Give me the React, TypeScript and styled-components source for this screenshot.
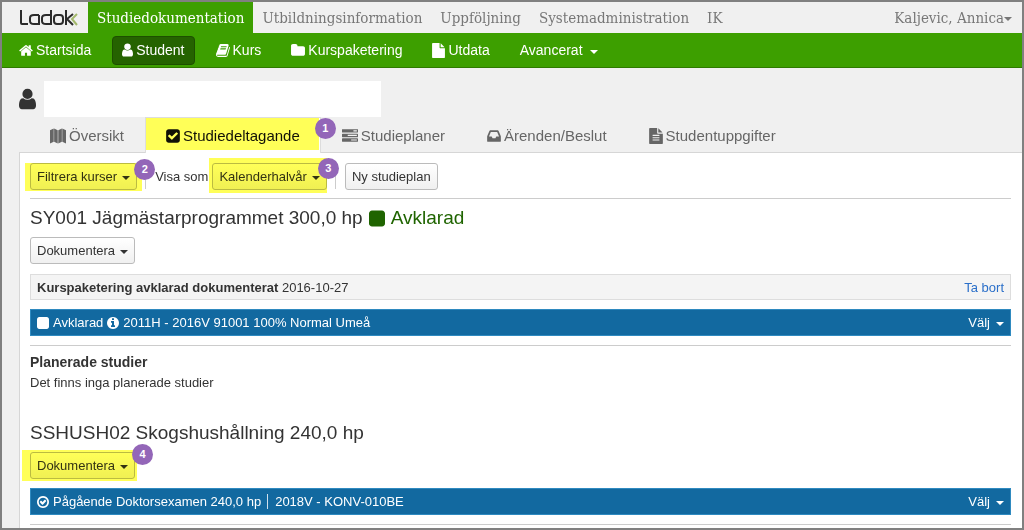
import React from 'react';
import styled, { createGlobalStyle, css } from 'styled-components';

const GlobalStyle = createGlobalStyle`
  * { box-sizing: border-box; }
  body { margin: 0; background: #fff; }
  body, button { font-family: "Liberation Sans", Arial, sans-serif; font-size: 13px; color: #333; }
  button { margin: 0; cursor: pointer; }
  h1, h2, h3, p { margin: 0; }
`;

/* Each glyph: left edge, width on the 1792 grid, path */
const glyphs: Record<string, [number, number, string]> = {
  home: [64, 1664, 'M1472 992v480q0 26-19 45t-45 19h-384v-384h-256v384h-384q-26 0-45-19t-19-45v-480q0-1 .5-3t.5-3l575-474 575 474q1 2 1 6zm223-69l-62 74q-8 9-21 11h-3q-13 0-21-7l-692-577-692 577q-12 8-24 7-13-2-21-11l-62-74q-8-10-7-23.5t11-21.5l719-599q32-26 76-26t76 26l244 204v-195q0-14 9-23t23-9h192q14 0 23 9t9 23v408l219 182q10 8 11 21.5t-7 23.5z'],
  user: [256, 1280, 'M1536 1399q0 109-62.5 187t-150.5 78h-854q-88 0-150.5-78t-62.5-187q0-85 8.5-160.5t31.5-152 58.5-131 94-89 134.5-34.5q131 128 313 128t313-128q76 0 134.5 34.5t94 89 58.5 131 31.5 152 8.5 160.5zm-256-887q0 159-112.5 271.5t-271.5 112.5-271.5-112.5-112.5-271.5 112.5-271.5 271.5-112.5 271.5 112.5 112.5 271.5z'],
  book: [64, 1664, 'M1703 478q40 57 18 129l-275 906q-19 64-76.5 107.5t-122.5 43.5h-923q-77 0-148.5-53.5t-99.5-131.5q-24-67-2-127 0-4 3-27t4-37q1-8-3-21.5t-3-19.5q2-11 8-21t16.5-23.5 16.5-23.5q23-38 45-91.5t30-91.5q3-10 .5-30t-.5-28q3-11 17-28t17-23q21-36 42-92t25-90q1-9-2.5-32t.5-28q4-13 22-30.5t22-22.5q19-26 42.5-84.5t27.5-96.5q1-8-3-25.5t-2-26.5q2-8 9-18t18-23 17-21q8-12 16.5-30.5t15-35 16-36 19.5-32 26.5-23.5 36-11.5 47.5 5.5l-1 3q38-9 51-9h761q74 0 114 56t18 130l-274 906q-36 119-71.5 153.5t-128.5 34.5h-869q-27 0-38 15-11 16-1 43 24 70 144 70h923q29 0 56-15.5t35-41.5l300-987q7-22 5-57 38 15 59 43zm-1064 2q-4 13 2 22.5t20 9.5h608q13 0 25.5-9.5t16.5-22.5l21-64q4-13-2-22.5t-20-9.5h-608q-13 0-25.5 9.5t-16.5 22.5zm-83 256q-4 13 2 22.5t20 9.5h608q13 0 25.5-9.5t16.5-22.5l21-64q4-13-2-22.5t-20-9.5h-608q-13 0-25.5 9.5t-16.5 22.5z'],
  folder: [64, 1664, 'M1728 608v704q0 92-66 158t-158 66h-1216q-92 0-158-66t-66-158v-960q0-92 66-158t158-66h320q92 0 158 66t66 158v32h672q92 0 158 66t66 158z'],
  file: [128, 1536, 'M1152 512v-472q22 14 36 28l408 408q14 14 28 36h-472zm-128 32q0 40 28 68t68 28h544v1056q0 40-28 68t-68 28h-1344q-40 0-68-28t-28-68v-1600q0-40 28-68t68-28h800v544z'],
  map: [0, 1792, 'M0 256l416-192v1472l-416 192zM464 64l400 192v1472l-400-192zM928 256l400-192v1472l-400 192zM1376 64l416 192v1472l-416-192z'],
  check: [128, 1536, 'M813 1299l614-614q19-19 19-45t-19-45l-102-102q-19-19-45-19t-45 19l-467 467-211-211q-19-19-45-19t-45 19l-102 102q-19 19-19 45t19 45l358 358q19 19 45 19t45-19zm851-883v960q0 119-84.5 203.5t-203.5 84.5h-960q-119 0-203.5-84.5t-84.5-203.5v-960q0-119 84.5-203.5t203.5-84.5h960q119 0 203.5 84.5t84.5 203.5z'],
  tasks: [0, 1792, 'M1024 1408h640v-128h-640v128zm-384-512h1024v-128h-1024v128zm640-512h384v-128h-384v128zm512 832v256q0 26-19 45t-45 19h-1664q-26 0-45-19t-19-45v-256q0-26 19-45t45-19h1664q26 0 45 19t19 45zm0-512v256q0 26-19 45t-45 19h-1664q-26 0-45-19t-19-45v-256q0-26 19-45t45-19h1664q26 0 45 19t19 45zm0-512v256q0 26-19 45t-45 19h-1664q-26 0-45-19t-19-45v-256q0-26 19-45t45-19h1664q26 0 45 19t19 45z'],
  inbox: [128, 1536, 'M1151 960h316q-1-3-2.5-8.5t-2.5-7.5l-212-496h-708l-212 496q-1 3-2.5 8.5t-2.5 7.5h316l95 192h320zm513 30v482q0 26-19 45t-45 19h-1408q-26 0-45-19t-19-45v-482q0-62 25-123l238-552q10-25 36.5-42t52.5-17h832q26 0 52.5 17t36.5 42l238 552q25 61 25 123z'],
  fileText: [128, 1536, 'M1596 476q14 14 28 36h-472v-472q22 14 36 28zm-476 164h544v1056q0 40-28 68t-68 28h-1344q-40 0-68-28t-28-68v-1600q0-40 28-68t68-28h800v544q0 40 28 68t68 28zm160 736v-64q0-14-9-23t-23-9h-704q-14 0-23 9t-9 23v64q0 14 9 23t23 9h704q14 0 23-9t9-23zm0-256v-64q0-14-9-23t-23-9h-704q-14 0-23 9t-9 23v64q0 14 9 23t23 9h704q14 0 23-9t9-23zm0-256v-64q0-14-9-23t-23-9h-704q-14 0-23 9t-9 23v64q0 14 9 23t23 9h704q14 0 23-9t9-23z'],
  info: [128, 1536, 'M1152 1376v-160q0-14-9-23t-23-9h-96v-512q0-14-9-23t-23-9h-320q-14 0-23 9t-9 23v160q0 14 9 23t23 9h96v320h-96q-14 0-23 9t-9 23v160q0 14 9 23t23 9h448q14 0 23-9t9-23zm-128-896v-160q0-14-9-23t-23-9h-192q-14 0-23 9t-9 23v160q0 14 9 23t23 9h192q14 0 23-9t9-23zm640 416q0 209-103 385.5t-279.5 279.5-385.5 103-385.5-103-279.5-279.5-103-385.5 103-385.5 279.5-279.5 385.5-103 385.5 103 279.5 279.5 103 385.5z'],
  checkCircle: [128, 1536, 'M1299 813l-422 422q-19 19-45 19t-45-19l-294-294q-19-19-19-45t19-45l102-102q19-19 45-19t45 19l147 147 275-275q19-19 45-19t45 19l102 102q19 19 19 45t-19 45zm141 83q0-148-73-273t-198-198-273-73-273 73-198 198-73 273 73 273 198 198 273 73 273-73 198-198 73-273zm224 0q0 209-103 385.5t-279.5 279.5-385.5 103-385.5-103-279.5-279.5-103-385.5 103-385.5 279.5-279.5 385.5-103 385.5 103 279.5 279.5 103 385.5z'],
  square: [128, 1536, 'M1664 416v960q0 119-84.5 203.5t-203.5 84.5h-960q-119 0-203.5-84.5t-84.5-203.5v-960q0-119 84.5-203.5t203.5-84.5h960q119 0 203.5 84.5t84.5 203.5z'],
};

const Svg = styled.svg`
  flex: none;
  fill: currentColor;
`;

function Icon({ name, size = 16 }: { name: string; size?: number }) {
  const [left, width, path] = glyphs[name];
  return (
    <Svg
      width={Math.round((size * width) / 1792)}
      height={size}
      viewBox={`${left} 0 ${width} 1792`}
      aria-hidden="true"
    >
      <path d={path} />
    </Svg>
  );
}

const Caret = styled.span`
  flex: none;
  margin-top: 3px;
  border: 4px solid transparent;
  border-top-color: currentColor;
  border-bottom: 0;
`;

const Page = styled.div`
  min-height: 100vh;
  display: flex;
  flex-direction: column;
  border: 2px solid #808080;
  background: #f0f0f0;
`;

const TopBar = styled.header`
  display: flex;
  height: 31px;
  color: #777;
  font-family: "DejaVu Serif Condensed", "Liberation Serif", serif;
  font-size: 15px;
`;

const Logo = styled.a`
  display: flex;
  align-items: center;
  width: 86px;
  padding-left: 17px;
`;

const TopNav = styled.nav`
  flex: 1;
  display: flex;
`;

const TopLink = styled.a<{ $active?: boolean }>`
  display: flex;
  align-items: center;
  padding: 0 9px;
  color: inherit;
  text-decoration: none;
  white-space: nowrap;
  ${(p) => p.$active && css`background: #3d9f00; color: #fff;`}
`;

const UserMenu = styled.button`
  display: flex;
  align-items: center;
  border: 0;
  padding: 0 10px;
  background: none;
  color: inherit;
  font: inherit;
`;

const MainNav = styled.nav`
  display: flex;
  align-items: center;
  height: 35px;
  padding: 0 8px;
  border-bottom: 1px solid #2f7a00;
  background: #3d9f00;
  font-size: 14px;
`;

const NavLink = styled.a<{ $active?: boolean }>`
  display: flex;
  align-items: center;
  gap: 3px;
  height: 29px;
  margin-right: 12px;
  padding: 0 8px;
  border: 1px solid transparent;
  border-radius: 4px;
  color: #fff;
  text-decoration: none;
  ${(p) => p.$active && css`
    padding: 0 9px;
    background: #256300;
    border-color: #1d4f00;
  `}
`;

const MoreLabel = styled.span`
  margin-right: 4px;
`;

const StudentBar = styled.div`
  display: flex;
  align-items: center;
  gap: 8px;
  padding: 13px 17px 0;
`;

const StudentName = styled.div`
  width: 337px;
  height: 36px;
  background: #fff;
`;

const Tabs = styled.nav`
  display: flex;
  padding-left: 27px;
`;

const Tab = styled.a<{ $active?: boolean }>`
  position: relative;
  display: flex;
  align-items: center;
  gap: 3px;
  height: 36px;
  margin-bottom: -1px;
  padding: 0 20px;
  border: 1px solid transparent;
  border-bottom: 0;
  color: #666;
  font-size: 15px;
  text-decoration: none;
  ${(p) => p.$active && css`background: #fff; border-color: #ddd; color: #111; z-index: 1;`}
`;

const Panel = styled.main`
  flex: 1;
  margin-left: 17px;
  padding: 10px 11px 0 10px;
  border-top: 1px solid #d6d6d6;
  border-left: 1px solid #d6d6d6;
  background: #fff;
`;

const Toolbar = styled.div`
  display: flex;
  align-items: center;
  padding-bottom: 8px;
  border-bottom: 1px solid #ccc;
`;

const Separator = styled.span`
  width: 1px;
  height: 24px;
  margin: 0 9px 0 8px;
  background: #ccc;
`;

const ToolLabel = styled.span`
  margin-right: 4px;
`;

const Marked = styled.span`
  position: relative;
  display: inline-flex;
`;

/* Translucent marker stroke laid over a control */
const Marker = styled.span<{ $inset: string }>`
  position: absolute;
  inset: ${(p) => p.$inset};
  background: #ffff58;
  mix-blend-mode: multiply;
  pointer-events: none;
`;

const Badge = styled.span<{ $top: number; $right: number }>`
  position: absolute;
  z-index: 2;
  top: ${(p) => p.$top}px;
  right: ${(p) => p.$right}px;
  width: 21px;
  height: 21px;
  border-radius: 50%;
  background: #9366b8;
  color: #fff;
  font-size: 11px;
  font-weight: bold;
  line-height: 21px;
  text-align: center;
`;

const Button = styled.button`
  display: inline-flex;
  align-items: center;
  gap: 5px;
  height: 27px;
  padding: 0 6px;
  border: 1px solid #bbb;
  border-radius: 3px;
  background: linear-gradient(#fff, #f0f0f0);
  white-space: nowrap;
`;

const Program = styled.section`
  padding-bottom: 20px;
`;

const Title = styled.h2`
  display: flex;
  align-items: center;
  gap: 6px;
  height: 38px;
  font-size: 19px;
  font-weight: normal;
`;

const Status = styled.span`
  display: flex;
  align-items: center;
  gap: 6px;
  color: #1f6400;
`;

const Notice = styled.div`
  display: flex;
  align-items: center;
  justify-content: space-between;
  height: 26px;
  margin-top: 10px;
  padding: 0 6px;
  border: 1px solid #ddd;
  background: #f4f4f4;
`;

const RemoveLink = styled.a`
  color: #2a6fc9;
  text-decoration: none;
`;

const Period = styled.div`
  display: flex;
  align-items: center;
  gap: 4px;
  height: 27px;
  margin-top: 9px;
  padding: 0 6px;
  border: 1px solid #2f8ac0;
  background: #1269a0;
  color: #fff;
`;

const Divided = styled.span`
  margin-left: 2px;
  padding-left: 7px;
  border-left: 1px solid #d0e0ec;
`;

const Choose = styled.button`
  display: flex;
  align-items: center;
  gap: 6px;
  margin-left: auto;
  border: 0;
  padding: 0;
  background: none;
  color: #fff;
`;

const Rule = styled.hr`
  margin: 9px 0 0;
  border: 0;
  border-top: 1px solid #ccc;
`;

const Subtitle = styled.h3`
  margin-top: 6px;
  font-size: 14px;
  line-height: 20px;
`;

const Text = styled.p`
  line-height: 22px;
`;

function LadokLogo() {
  return (
    <svg width="60" height="18" viewBox="0 0 60 18" fill="none" stroke="#2b2b2b" strokeWidth="2" aria-hidden="true">
      <path d="M2 1v13q0 1 1 1h6" />
      <path d="M20 6h-5q-4 0-4 3v3q0 3 4 3h5V6" />
      <path d="M32 1v14h-5q-4 0-4-3V9q0-3 4-3h5" />
      <rect x="35" y="6" width="9" height="9" rx="3" />
      <path d="M47 1v15M54 5l-6 5 6 6" />
      <path d="M58 5l-5 5 5 6" stroke="#a3b86c" />
    </svg>
  );
}

export default function App() {
  return (
    <Page>
      <GlobalStyle />
      <TopBar>
        <Logo href="#" aria-label="Ladok"><LadokLogo /></Logo>
        <TopNav>
          <TopLink href="#" $active>Studiedokumentation</TopLink>
          <TopLink href="#">Utbildningsinformation</TopLink>
          <TopLink href="#">Uppföljning</TopLink>
          <TopLink href="#">Systemadministration</TopLink>
          <TopLink href="#">IK</TopLink>
        </TopNav>
        <UserMenu>Kaljevic, Annica<Caret /></UserMenu>
      </TopBar>
      <MainNav>
        <NavLink href="#"><Icon name="home" size={15} />Startsida</NavLink>
        <NavLink href="#" $active><Icon name="user" size={16} />Student</NavLink>
        <NavLink href="#"><Icon name="book" size={15} />Kurs</NavLink>
        <NavLink href="#"><Icon name="folder" size={15} />Kurspaketering</NavLink>
        <NavLink href="#"><Icon name="file" size={15} />Utdata</NavLink>
        <NavLink href="#"><MoreLabel>Avancerat</MoreLabel><Caret /></NavLink>
      </MainNav>
      <StudentBar>
        <Icon name="user" size={24} />
        <StudentName />
      </StudentBar>
      <Tabs>
        <Tab href="#"><Icon name="map" />Översikt</Tab>
        <Tab href="#" $active>
          <Icon name="check" />Studiedeltagande
          <Marker $inset="0 1px 3px 0" />
          <Badge $top={0} $right={-16}>1</Badge>
        </Tab>
        <Tab href="#"><Icon name="tasks" />Studieplaner</Tab>
        <Tab href="#"><Icon name="inbox" />Ärenden/Beslut</Tab>
        <Tab href="#"><Icon name="fileText" />Studentuppgifter</Tab>
      </Tabs>
      <Panel>
        <Toolbar>
          <Marked>
            <Button>Filtrera kurser<Caret /></Button>
            <Marker $inset="0 -5px -1px -5px" />
            <Badge $top={-4} $right={-18}>2</Badge>
          </Marked>
          <Separator />
          <ToolLabel>Visa som</ToolLabel>
          <Marked>
            <Button>Kalenderhalvår<Caret /></Button>
            <Marker $inset="-5px 0 -3px -3px" />
            <Badge $top={-5} $right={-12}>3</Badge>
          </Marked>
          <Separator />
          <Button>Ny studieplan</Button>
        </Toolbar>
        <Program>
          <Title>
            SY001 Jägmästarprogrammet 300,0 hp
            <Status><Icon name="square" size={19} />Avklarad</Status>
          </Title>
          <Button>Dokumentera<Caret /></Button>
          <Notice>
            <span><b>Kurspaketering avklarad dokumenterat</b> 2016-10-27</span>
            <RemoveLink href="#">Ta bort</RemoveLink>
          </Notice>
          <Period>
            <Icon name="square" size={14} />Avklarad
            <Icon name="info" size={14} />2011H - 2016V 91001 100% Normal Umeå
            <Choose>Välj<Caret /></Choose>
          </Period>
          <Rule />
          <Subtitle>Planerade studier</Subtitle>
          <Text>Det finns inga planerade studier</Text>
        </Program>
        <Title>SSHUSH02 Skogshushållning 240,0 hp</Title>
        <Marked>
          <Button>Dokumentera<Caret /></Button>
          <Marker $inset="-2px -2px -2px -8px" />
          <Badge $top={-8} $right={-18}>4</Badge>
        </Marked>
        <Period>
          <Icon name="checkCircle" size={14} />Pågående Doktorsexamen 240,0 hp
          <Divided>2018V - KONV-010BE</Divided>
          <Choose>Välj<Caret /></Choose>
        </Period>
        <Rule />
      </Panel>
    </Page>
  );
}
